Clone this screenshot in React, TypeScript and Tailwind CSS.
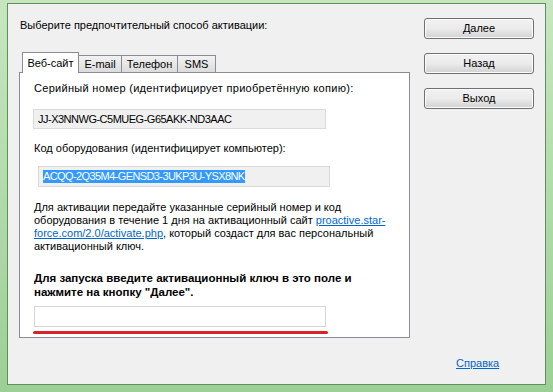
import React from "react";

const font = { fontFamily: '"Liberation Sans", Arial, sans-serif' };

function Btn({ label }: { label: string }) {
  return (
    <div className="w-[110px] h-[21px] rounded-[3px] border border-[#707070] bg-gradient-to-b from-[#f2f2f2] via-[#ebebeb] to-[#d2d2d2] flex items-center justify-center text-[11px] text-black shadow-[inset_0_0_0_1px_#fcfcfc]">
      {label}
    </div>
  );
}

function Tab({ label, active, w }: { label: string; active?: boolean; w: string }) {
  if (active) {
    return (
      <div className={`${w} h-[21px] bg-white border border-b-0 border-[#898c95] flex items-center justify-center -mr-px relative z-10 mb-[-1px]`}>
        {label}
      </div>
    );
  }
  return (
    <div className={`${w} h-[17px] bg-gradient-to-b from-[#f2f2f2] to-[#dcdcdc] border border-b-0 border-[#898c95] flex items-center justify-center -mr-px`}>
      {label}
    </div>
  );
}

export default function App() {
  return (
    <div
      className="w-[553px] h-[392px] bg-gradient-to-b from-[#c7e6c0] to-[#9ccf95] pt-[3px] pl-[7px] pr-[7px] pb-[7px] text-[#000]"
      style={font}
    >
      <div className="w-full h-full bg-[#f0f0f0] border border-[#5f8f5a] flex text-[11px] leading-[13px]">
        <div className="w-[407px] pl-[11px] pt-[15px] flex flex-col">
          <div className="pl-[1px]">Выберите предпочтительный способ активации:</div>
          <div className="mt-[20px] flex items-end pl-[3px] h-[20px]">
            <Tab label="Веб-сайт" active w="w-[57px]" />
            <Tab label="E-mail" w="w-[44px]" />
            <Tab label="Телефон" w="w-[57px]" />
            <Tab label="SMS" w="w-[39px]" />
          </div>
          <div className="w-[391px] h-[266px] bg-white border border-[#898c95] pl-[14px] pt-[9px] flex flex-col">
            <div className="tracking-[0.3px]">Серийный номер (идентифицирует приобретённую копию):</div>
            <div className="mt-[14px] -ml-[1px] w-[293px] h-[20px] bg-[#f0f0f0] border border-[#dadada] pl-[4px] flex items-center tracking-[-0.5px]">
              JJ-X3NNWG-C5MUEG-G65AKK-ND3AAC
            </div>
            <div className="mt-[13px]">Код оборудования (идентифицирует компьютер):</div>
            <div className="mt-[11px] ml-[4px] w-[292px] h-[21px] bg-[#f0f0f0] border border-[#dadada] pl-[4px] flex items-center">
              <span className="bg-[#3399ff] text-white leading-[13px] tracking-[-0.6px] pr-[1px]">ACQQ-2Q35M4-GENSD3-3UKP3U-YSX8NK</span>
            </div>
            <div className="mt-[14px] whitespace-nowrap">
              Для активации передайте указанные серийный номер и код
              <br />
              оборудования в течение 1 дня на активационный сайт{" "}
              <span className="text-[#0066cc] underline">proactive.star-</span>
              <br />
              <span className="text-[#0066cc] underline">force.com/2.0/activate.php</span>, который создаст для вас персональный
              <br />
              активационный ключ.
            </div>
            <div className="mt-[18px] font-bold whitespace-nowrap leading-[14px] text-[11.5px]">
              Для запуска введите активационный ключ в это поле и
              <br />
              нажмите на кнопку "Далее".
            </div>
            <div className="mt-[7px] w-[292px] h-[21px] bg-white border border-[#d5d5d5]" />
            <div className="mt-[4px] -ml-[1px] w-[295px] h-[3px] rounded-full bg-[#d8232a]" />
          </div>
        </div>
        <div className="flex-1 flex flex-col">
          <div className="pl-[9px] pt-[14px] flex flex-col gap-[14px]">
            <Btn label="Далее" />
            <Btn label="Назад" />
            <Btn label="Выход" />
          </div>
          <div className="mt-auto mb-[14px] pl-[41px] text-[#0066cc] underline">Справка</div>
        </div>
      </div>
    </div>
  );
}
